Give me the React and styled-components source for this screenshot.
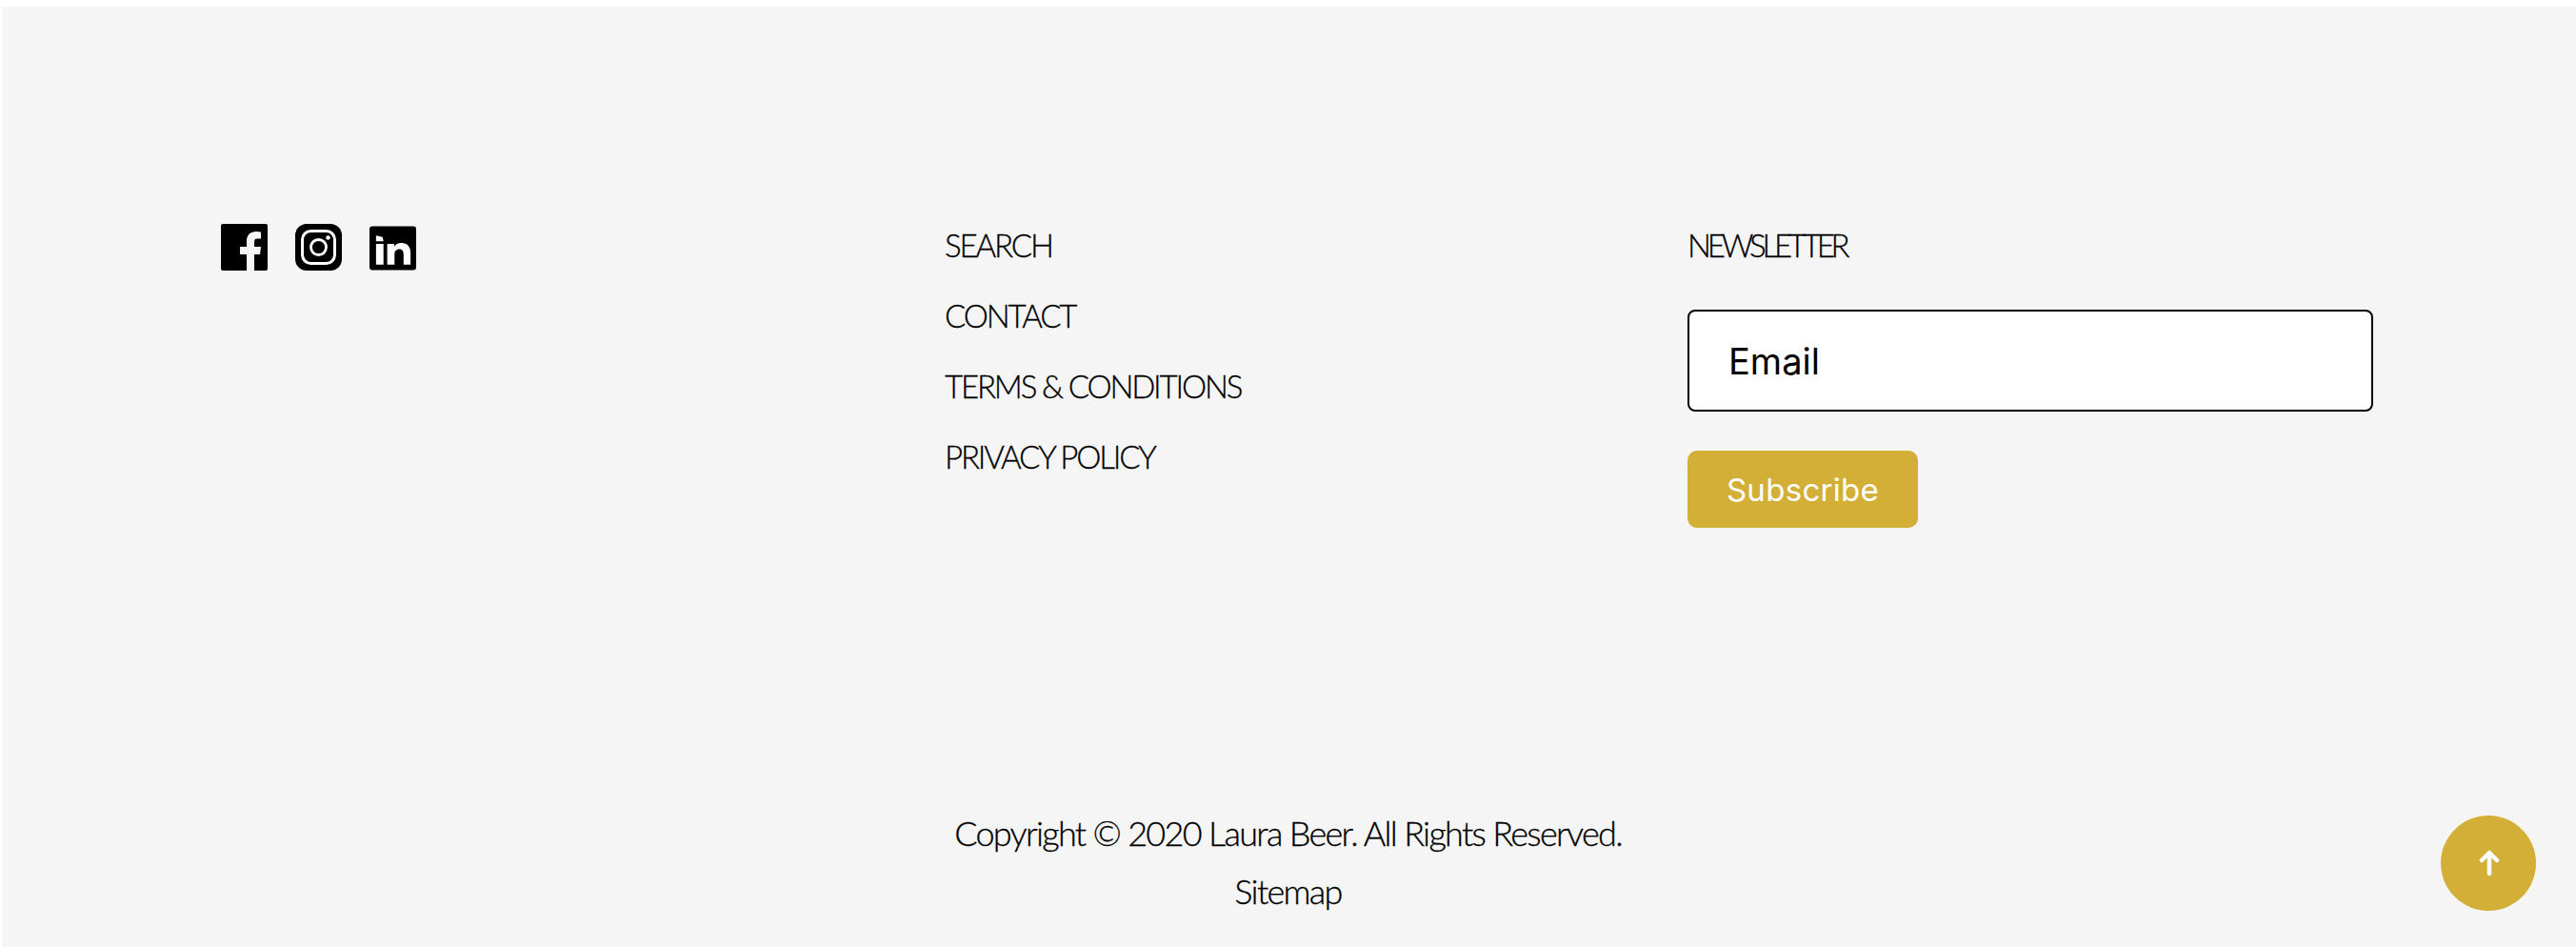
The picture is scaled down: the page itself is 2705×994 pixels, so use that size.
import React from "react";
import styled, { createGlobalStyle } from "styled-components";

const Global = createGlobalStyle`
  html, body { margin: 0; padding: 0; background: #fff; overflow: hidden; }
  body { font-family: "Lato", "Liberation Sans", sans-serif; color: #000; }
`;

const Footer = styled.footer`
  position: relative;
  box-sizing: border-box;
  height: 987px;
  margin: 7px 0 0 2px;
  background: #f5f5f5;
  padding: 226px 0 0 230px;
  display: flex;
  flex-direction: column;
`;

const Columns = styled.div`
  display: grid;
  grid-template-columns: 760px 780px 720px;
  height: 611px;
`;

const Socials = styled.div`
  display: flex;
  align-items: flex-start;
  gap: 29px;
  padding-top: 2px;
`;

const Social = styled.a`
  display: block;
  width: 49px;
  height: 49px;
  svg { display: block; width: 100%; height: 100%; }
`;

const LinkList = styled.ul`
  list-style: none;
  margin: 0;
  padding: 0;
  display: flex;
  flex-direction: column;
  gap: 26px;
`;

const NavLink = styled.a`
  display: block;
  font-size: 33px;
  font-weight: 300;
  line-height: 48px;
  letter-spacing: -2.15px;
  -webkit-text-stroke: 0.3px #000;
  color: #000;
  white-space: nowrap;
`;

const Heading = styled.h4`
  margin: 0 0 44px;
  font-size: 33px;
  font-weight: 300;
  line-height: 48px;
  letter-spacing: -4.2px;
  -webkit-text-stroke: 0.3px #000;
`;

const EmailBox = styled.div`
  box-sizing: border-box;
  width: 720px;
  height: 107px;
  display: flex;
  align-items: center;
  padding-left: 41px;
  background: #fff;
  border: 2px solid #000;
  border-radius: 8px;
  font-family: "Inter", sans-serif;
  font-size: 38px;
  letter-spacing: 0;
`;

const Subscribe = styled.button`
  box-sizing: border-box;
  display: block;
  width: 242px;
  height: 81px;
  margin-top: 41px;
  padding: 0;
  border: 0;
  border-radius: 10px;
  background: #d3af37;
  color: #fff;
  font-family: "Inter", sans-serif;
  font-size: 33px;
  letter-spacing: 0.3px;
`;

const Bottom = styled.div`
  margin: 0 0 0 -230px;
  padding-right: 2px;
  text-align: center;
  font-size: 36px;
  font-weight: 300;
  line-height: 61px;
  letter-spacing: -1.7px;
  -webkit-text-stroke: 0.3px #000;
`;

const BottomLine = styled.div``;

const ScrollTop = styled.button`
  position: absolute;
  right: 42px;
  bottom: 38px;
  width: 100px;
  height: 100px;
  padding: 0 0 0 2px;
  border: 0;
  border-radius: 50%;
  background: #d3af37;
  display: flex;
  align-items: center;
  justify-content: center;
`;

const Facebook = () => (
  <svg viewBox="0 0 49 49">
    <path fill="#000" d="M2 0H47A2 2 0 0 1 49 2V47A2 2 0 0 1 47 49H35V32H41L42 24H35V19C35 16.5 36 15.5 38 15.5H42V8.5C40.5 8.2 39 8 37 8C31 8 27 11.5 27 18V24H20V32H27V49H2A2 2 0 0 1 0 47V2A2 2 0 0 1 2 0Z" />
  </svg>
);

const Instagram = () => (
  <svg viewBox="0 0 49 49">
    <rect width="49" height="49" rx="12" fill="#000" />
    <rect x="7.5" y="7.5" width="34" height="34" rx="9" fill="none" stroke="#fff" strokeWidth="3" />
    <circle cx="24.5" cy="24.5" r="8" fill="none" stroke="#fff" strokeWidth="2.8" />
    <circle cx="34.5" cy="14.5" r="2.2" fill="#fff" />
  </svg>
);

const Linkedin = () => (
  <svg viewBox="0 0 50 49">
    <rect x="0" y="2" width="50" height="47" rx="3" fill="#000" />
    <path fill="#fff" d="M7 21H15V43H7ZM7 12L14 13.5L15 18H7ZM19 21H26.5V24C28 21.5 30.5 20 34 20C40.5 20 44 23.5 44 31V43H36.5V32C36.5 28.5 35.2 26.5 32 26.5C28.5 26.5 26.8 28.8 26.8 32V43H19Z" />
  </svg>
);

const links = ["SEARCH", "CONTACT", "TERMS & CONDITIONS", "PRIVACY POLICY"];

export default function App() {
  return (
    <>
      <Global />
      <Footer>
        <Columns>
          <Socials>
            <Social aria-label="Facebook"><Facebook /></Social>
            <Social aria-label="Instagram"><Instagram /></Social>
            <Social aria-label="LinkedIn"><Linkedin /></Social>
          </Socials>
          <LinkList>
            {links.map((l) => (
              <li key={l}><NavLink>{l}</NavLink></li>
            ))}
          </LinkList>
          <div>
            <Heading>NEWSLETTER</Heading>
            <EmailBox>Email</EmailBox>
            <Subscribe>Subscribe</Subscribe>
          </div>
        </Columns>
        <Bottom>
          <BottomLine>Copyright © 2020 Laura Beer. All Rights Reserved.</BottomLine>
          <BottomLine>Sitemap</BottomLine>
        </Bottom>
        <ScrollTop aria-label="Back to top">
          <svg width="22" height="28" viewBox="0 0 22 28" fill="none" stroke="#fff" strokeWidth="4.5" strokeLinecap="round" strokeLinejoin="round">
            <path d="M11 25V4M3 11L11 3L19 11" />
          </svg>
        </ScrollTop>
      </Footer>
    </>
  );
}
